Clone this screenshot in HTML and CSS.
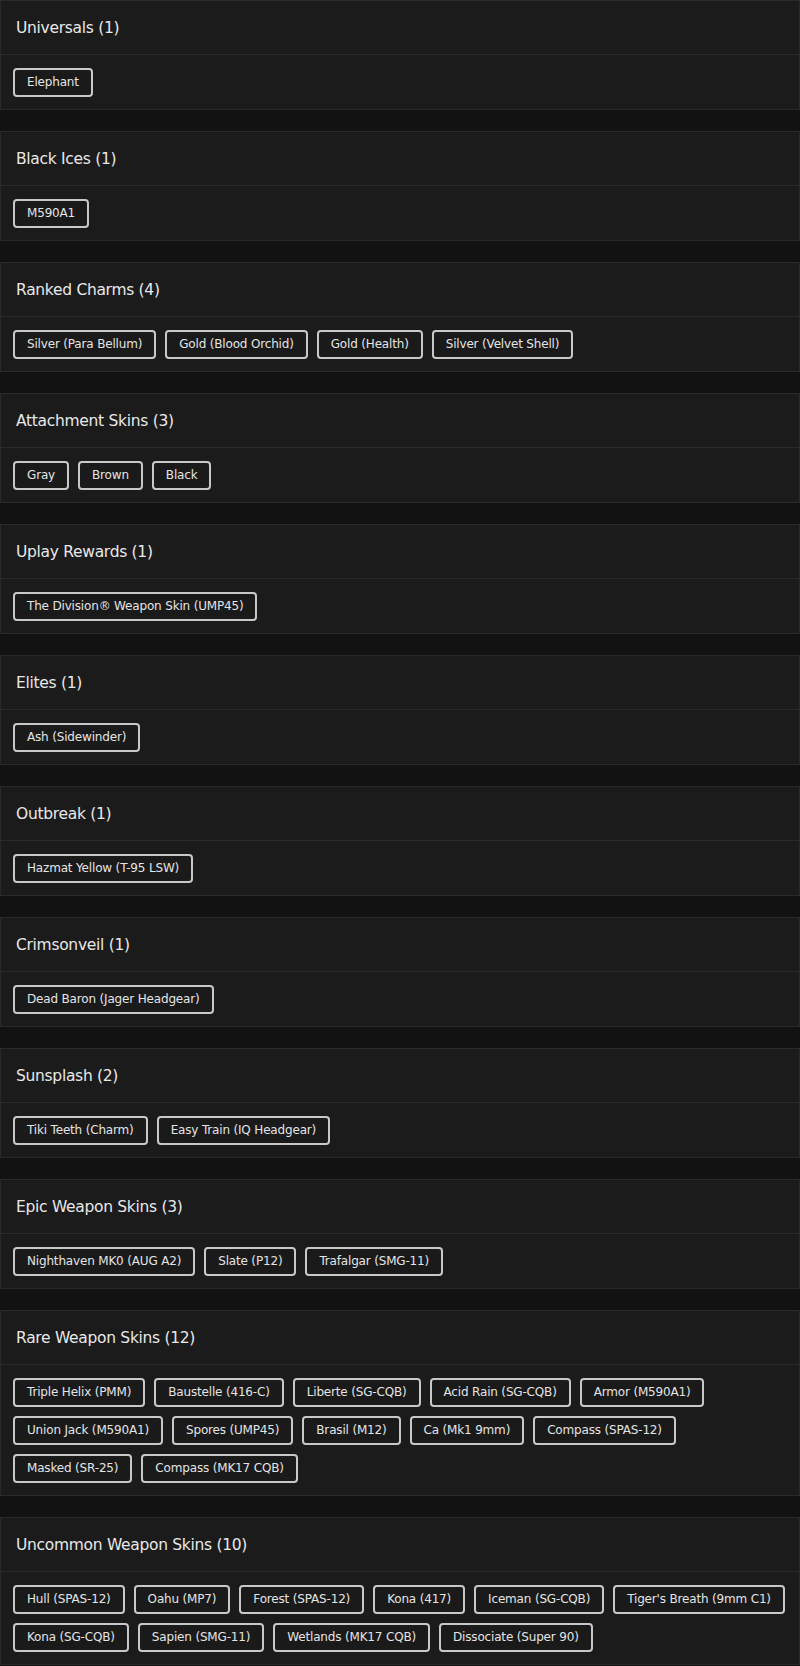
FILE: index.html
```html
<!DOCTYPE html>
<html>
<head>
<meta charset="utf-8">
<link rel="stylesheet" href="styles.css">
</head>
<body>
<div class="list">
  <section class="card">
    <h2 class="card-title">Universals (1)</h2>
    <div class="tags"><span class="tag">Elephant</span></div>
  </section>
  <section class="card">
    <h2 class="card-title">Black Ices (1)</h2>
    <div class="tags"><span class="tag">M590A1</span></div>
  </section>
  <section class="card">
    <h2 class="card-title">Ranked Charms (4)</h2>
    <div class="tags"><span class="tag">Silver (Para Bellum)</span><span class="tag">Gold (Blood Orchid)</span><span class="tag">Gold (Health)</span><span class="tag">Silver (Velvet Shell)</span></div>
  </section>
  <section class="card">
    <h2 class="card-title">Attachment Skins (3)</h2>
    <div class="tags"><span class="tag">Gray</span><span class="tag">Brown</span><span class="tag">Black</span></div>
  </section>
  <section class="card">
    <h2 class="card-title">Uplay Rewards (1)</h2>
    <div class="tags"><span class="tag">The Division® Weapon Skin (UMP45)</span></div>
  </section>
  <section class="card">
    <h2 class="card-title">Elites (1)</h2>
    <div class="tags"><span class="tag">Ash (Sidewinder)</span></div>
  </section>
  <section class="card">
    <h2 class="card-title">Outbreak (1)</h2>
    <div class="tags"><span class="tag">Hazmat Yellow (T-95 LSW)</span></div>
  </section>
  <section class="card">
    <h2 class="card-title">Crimsonveil (1)</h2>
    <div class="tags"><span class="tag">Dead Baron (Jager Headgear)</span></div>
  </section>
  <section class="card">
    <h2 class="card-title">Sunsplash (2)</h2>
    <div class="tags"><span class="tag">Tiki Teeth (Charm)</span><span class="tag">Easy Train (IQ Headgear)</span></div>
  </section>
  <section class="card">
    <h2 class="card-title">Epic Weapon Skins (3)</h2>
    <div class="tags"><span class="tag">Nighthaven MK0 (AUG A2)</span><span class="tag">Slate (P12)</span><span class="tag">Trafalgar (SMG-11)</span></div>
  </section>
  <section class="card">
    <h2 class="card-title">Rare Weapon Skins (12)</h2>
    <div class="tags"><span class="tag">Triple Helix (PMM)</span><span class="tag">Baustelle (416-C)</span><span class="tag">Liberte (SG-CQB)</span><span class="tag">Acid Rain (SG-CQB)</span><span class="tag">Armor (M590A1)</span><span class="tag">Union Jack (M590A1)</span><span class="tag">Spores (UMP45)</span><span class="tag">Brasil (M12)</span><span class="tag">Ca (Mk1 9mm)</span><span class="tag">Compass (SPAS-12)</span><span class="tag">Masked (SR-25)</span><span class="tag">Compass (MK17 CQB)</span></div>
  </section>
  <section class="card">
    <h2 class="card-title">Uncommon Weapon Skins (10)</h2>
    <div class="tags"><span class="tag">Hull (SPAS-12)</span><span class="tag">Oahu (MP7)</span><span class="tag">Forest (SPAS-12)</span><span class="tag">Kona (417)</span><span class="tag">Iceman (SG-CQB)</span><span class="tag">Tiger's Breath (9mm C1)</span><span class="tag">Kona (SG-CQB)</span><span class="tag">Sapien (SMG-11)</span><span class="tag">Wetlands (MK17 CQB)</span><span class="tag">Dissociate (Super 90)</span></div>
  </section>
</div>
</body>
</html>
```

FILE: styles.css
```css
html, body {
  margin: 0;
  padding: 0;
  background: #121212;
}

body {
  font-family: "DejaVu Sans", "Liberation Sans", sans-serif;
  color: #e6e6e6;
}

.list {
  display: flex;
  flex-direction: column;
  gap: 21px;
}

.card {
  background: #1b1b1b;
  border: 1px solid #2a2a2a;
}

.card-title {
  margin: 0;
  height: 53px;
  padding: 0 15px;
  display: flex;
  align-items: center;
  font-size: 15.5px;
  font-weight: 400;
  letter-spacing: -0.3px;
  color: #e8e8e8;
  border-bottom: 1px solid #2a2a2a;
}

.tags {
  display: flex;
  flex-wrap: wrap;
  gap: 9px 9px;
  padding: 13px 11px 12px 12px;
}

.tag {
  box-sizing: border-box;
  height: 29px;
  line-height: 25px;
  padding: 0 12px;
  border: 2px solid #c8c8c8;
  border-radius: 4px;
  background: #1a1a1a;
  font-size: 12px;
  letter-spacing: -0.17px;
  color: #e4e4e4;
  white-space: nowrap;
}
```
